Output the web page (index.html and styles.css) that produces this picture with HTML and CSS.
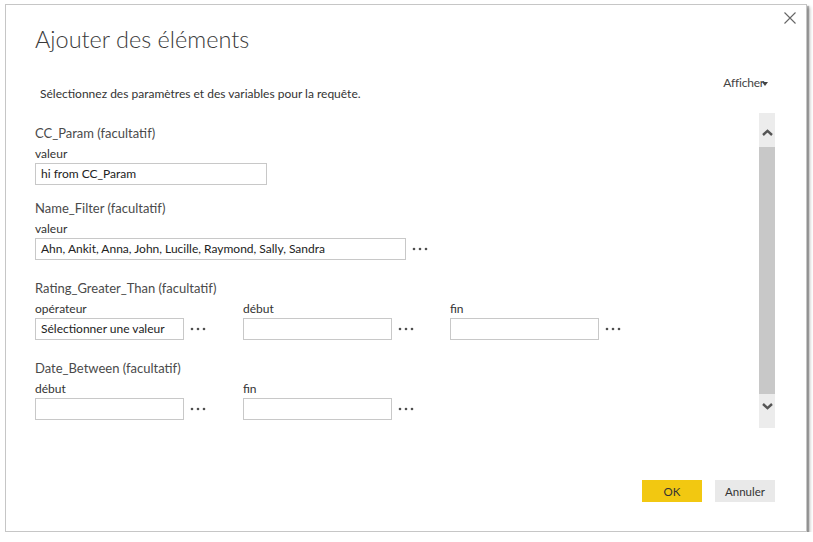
FILE: index.html
```html
<!DOCTYPE html>
<html lang="fr">
<head>
<meta charset="utf-8">
<title>Ajouter des éléments</title>
<link rel="stylesheet" href="styles.css">
</head>
<body>
<div class="dialog">
  <button class="close" aria-label="Fermer">
    <svg width="12" height="12" viewBox="0 0 12 12"><path d="M0.5 0.5 L11.5 11.5 M11.5 0.5 L0.5 11.5" stroke="#666" stroke-width="1.1" fill="none"/></svg>
  </button>
  <h1 class="title">Ajouter des éléments</h1>
  <div class="toolbar">
    <p class="subtitle">Sélectionnez des paramètres et des variables pour la requête.</p>
    <div class="show">Afficher<svg class="caret" width="6" height="4" viewBox="0 0 6 4"><path d="M0 0 H6 L3 4 Z" fill="#444"/></svg></div>
  </div>
  <div class="body">
    <div class="form">
      <section class="group">
        <div class="heading">CC_Param (facultatif)</div>
        <div class="field">
          <div class="label">valeur</div>
          <div class="row">
            <div class="input w-cc">hi from CC_Param</div>
          </div>
        </div>
      </section>
      <section class="group">
        <div class="heading">Name_Filter (facultatif)</div>
        <div class="field">
          <div class="label">valeur</div>
          <div class="row">
            <div class="input w-name">Ahn, Ankit, Anna, John, Lucille, Raymond, Sally, Sandra</div>
            <span class="dots"><svg width="16" height="4" viewBox="0 0 16 4"><circle cx="2" cy="2" r="1.3"/><circle cx="8" cy="2" r="1.3"/><circle cx="14" cy="2" r="1.3"/></svg></span>
          </div>
        </div>
      </section>
      <section class="group">
        <div class="heading">Rating_Greater_Than (facultatif)</div>
        <div class="cols">
          <div class="field">
            <div class="label">opérateur</div>
            <div class="row">
              <div class="input w-col">Sélectionner une valeur</div>
              <span class="dots"><svg width="16" height="4" viewBox="0 0 16 4"><circle cx="2" cy="2" r="1.3"/><circle cx="8" cy="2" r="1.3"/><circle cx="14" cy="2" r="1.3"/></svg></span>
            </div>
          </div>
          <div class="field">
            <div class="label">début</div>
            <div class="row">
              <div class="input w-col"></div>
              <span class="dots"><svg width="16" height="4" viewBox="0 0 16 4"><circle cx="2" cy="2" r="1.3"/><circle cx="8" cy="2" r="1.3"/><circle cx="14" cy="2" r="1.3"/></svg></span>
            </div>
          </div>
          <div class="field">
            <div class="label">fin</div>
            <div class="row">
              <div class="input w-col"></div>
              <span class="dots"><svg width="16" height="4" viewBox="0 0 16 4"><circle cx="2" cy="2" r="1.3"/><circle cx="8" cy="2" r="1.3"/><circle cx="14" cy="2" r="1.3"/></svg></span>
            </div>
          </div>
        </div>
      </section>
      <section class="group">
        <div class="heading">Date_Between (facultatif)</div>
        <div class="cols">
          <div class="field">
            <div class="label">début</div>
            <div class="row">
              <div class="input w-col"></div>
              <span class="dots"><svg width="16" height="4" viewBox="0 0 16 4"><circle cx="2" cy="2" r="1.3"/><circle cx="8" cy="2" r="1.3"/><circle cx="14" cy="2" r="1.3"/></svg></span>
            </div>
          </div>
          <div class="field">
            <div class="label">fin</div>
            <div class="row">
              <div class="input w-col"></div>
              <span class="dots"><svg width="16" height="4" viewBox="0 0 16 4"><circle cx="2" cy="2" r="1.3"/><circle cx="8" cy="2" r="1.3"/><circle cx="14" cy="2" r="1.3"/></svg></span>
            </div>
          </div>
        </div>
      </section>
    </div>
    <div class="scrollbar">
      <div class="arrow arrow-up">
        <svg width="11" height="7" viewBox="0 0 11 7"><path d="M1 6 L5.5 1.8 L10 6" stroke="#555" stroke-width="2.4" fill="none"/></svg>
      </div>
      <div class="thumb"></div>
      <div class="arrow arrow-down">
        <svg width="11" height="7" viewBox="0 0 11 7"><path d="M1 1 L5.5 5.2 L10 1" stroke="#555" stroke-width="2.4" fill="none"/></svg>
      </div>
    </div>
  </div>
  <div class="footer">
    <button class="btn btn-ok">OK</button>
    <button class="btn btn-cancel">Annuler</button>
  </div>
</div>
</body>
</html>
```
FILE: styles.css
```css
* { box-sizing: border-box; }
html, body {
  margin: 0;
  padding: 0;
  background: #ffffff;
}
body {
  font-family: "Lato", "Open Sans", sans-serif;
  color: #333333;
  font-size: 12px;
}
.dialog {
  position: relative;
  margin: 4px 0 0 5px;
  width: 802px;
  height: 528px;
  border: 1px solid #c6c6c6;
  background: #ffffff;
  box-shadow: 2px 2px 1px rgba(0, 0, 0, 0.25), 3px 3px 3px rgba(0, 0, 0, 0.25);
  padding: 0 31px 0 29px;
  display: flex;
  flex-direction: column;
}
.close {
  position: absolute;
  top: 7px;
  right: 10px;
  width: 12px;
  height: 12px;
  padding: 0;
  border: 0;
  background: none;
  display: flex;
}
.title {
  margin: 19px 0 0 0;
  font-size: 23.5px;
  font-weight: 300;
  line-height: 30px;
  color: #3a3a3a;
}
.toolbar {
  margin-top: 21px;
  display: flex;
  justify-content: space-between;
  height: 27px;
}
.subtitle {
  margin: 11px 0 0 5px;
  line-height: 16px;
  font-size: 12px;
  color: #333;
}
.show {
  align-self: flex-start;
  height: 16px;
  line-height: 16px;
  font-size: 12px;
  color: #444;
  margin-right: 7px;
  display: flex;
  align-items: center;
  letter-spacing: -0.2px;
}
.caret {
  margin-left: -2px;
  margin-top: 1px;
}
.body {
  margin-top: 11px;
  display: flex;
  height: 315px;
}
.form {
  flex: 1;
  padding-top: 12px;
}
.group {
  margin-bottom: 15px;
}
.heading {
  font-size: 13px;
  line-height: 16px;
  color: #4a4a4a;
  margin-bottom: 5px;
}
.label {
  line-height: 16px;
  color: #333;
  margin-bottom: 1px;
}
.row {
  display: flex;
  align-items: flex-start;
}
.input {
  height: 22px;
  border: 1px solid #c8c8c8;
  padding: 0 5px;
  line-height: 20px;
  font-size: 12px;
  color: #222;
  white-space: nowrap;
  overflow: hidden;
}
.w-cc { width: 232px; }
.w-name { width: 371px; }
.w-col { width: 149px; }
.dots {
  width: 28px;
  height: 27px;
  display: flex;
  justify-content: center;
  padding-top: 9px;
  fill: #505050;
}
.cols {
  display: flex;
}
.cols .field { width: 207px; }
.cols .field:first-child { width: 208px; }
.scrollbar {
  width: 16px;
  background: #ececec;
  display: flex;
  flex-direction: column;
}
.arrow {
  height: 34px;
  display: flex;
  justify-content: center;
}
.arrow-up {
  align-items: flex-start;
  padding-top: 16px;
}
.arrow-down {
  align-items: flex-start;
  padding-top: 9px;
}
.thumb {
  flex: 1;
  background: #c8c8c8;
}
.footer {
  margin-top: 52px;
  display: flex;
  justify-content: flex-end;
  gap: 13px;
}
.btn {
  width: 60px;
  height: 22px;
  border: 0;
  font-family: "Lato", "Open Sans", sans-serif;
  font-size: 11.5px;
  color: #333;
  padding: 0;
}
.btn-ok { background: #f2c811; }
.btn-cancel { background: #e9e9e9; }
```
